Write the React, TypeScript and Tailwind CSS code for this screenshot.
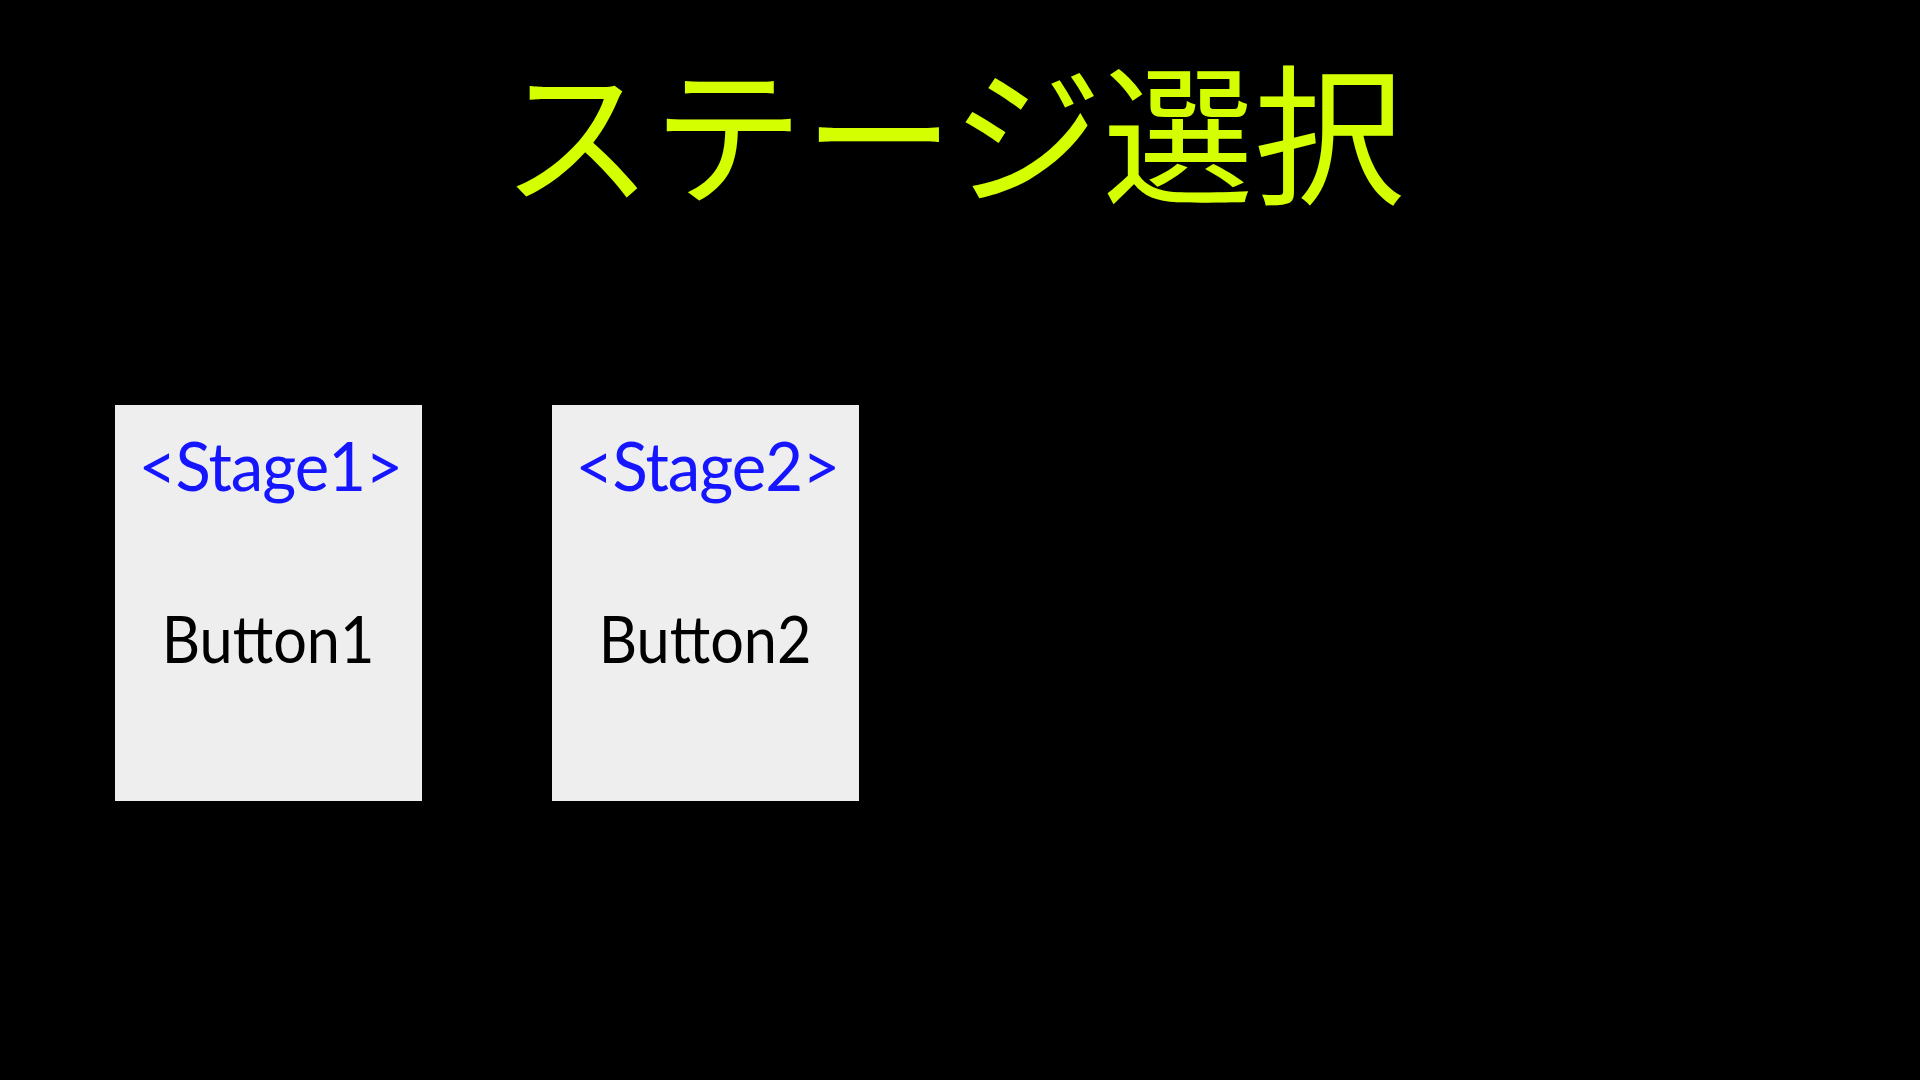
export default function App() {
  const stages = [
    { label: "<Stage1>", button: "Button1" },
    { label: "<Stage2>", button: "Button2" },
  ];

  return (
    <div className="w-[1920px] h-[1080px] bg-black overflow-hidden flex flex-col">
      {/* Title */}
      <h1 className="pt-[52px] pr-[14px] text-center text-[151px] leading-none text-[#d4ff00] font-['Noto_Sans_CJK_JP',sans-serif]">
        ステージ選択
      </h1>

      {/* Stage cards */}
      <div className="mt-[202px] pl-[115px] flex gap-[130px]">
        {stages.map((s) => (
          <div
            key={s.label}
            className="w-[307px] h-[396px] bg-[#eeeeee] flex flex-col items-center font-['Lato',sans-serif]"
          >
            <div className="mt-[26px] text-[68px] leading-none tracking-[-1px] text-[#1515ff] scale-x-[0.96] translate-x-[2px]">
              {s.label}
            </div>
            <div className="mt-[106px] text-[66px] leading-none text-black scale-x-[0.9]">
              {s.button}
            </div>
          </div>
        ))}
      </div>
    </div>
  );
}
